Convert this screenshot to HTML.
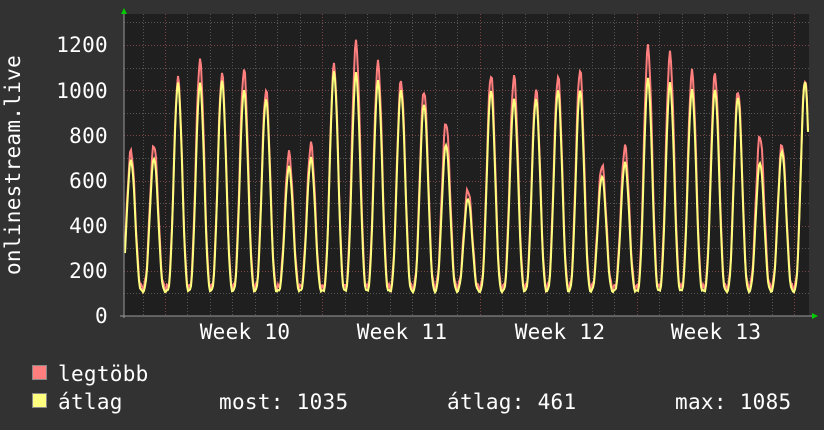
<!DOCTYPE html>
<html><head><meta charset="utf-8"><style>
body{margin:0;background:#323232;width:824px;height:430px;overflow:hidden;font-family:"DejaVu Sans Mono","Liberation Mono",monospace;}
svg{display:block}
text{fill:#fff;font-family:"DejaVu Sans Mono","Liberation Mono",monospace;font-size:21px;letter-spacing:0.3px}
</style></head><body>
<svg id="s" width="824" height="430" xmlns="http://www.w3.org/2000/svg">
<rect x="0" y="0" width="824" height="430" fill="#323232"/>
<rect x="124" y="14" width="685" height="302" fill="#1f1f1f"/>
<g id="grid"></g>
<g id="data"></g>
<line x1="124" y1="10" x2="124" y2="318" stroke="#999" stroke-width="1"/>
<line x1="120" y1="316" x2="814" y2="316" stroke="#999" stroke-width="1"/>
<polygon points="121,14 127,14 124,8" fill="#00cc00"/>
<polygon points="812,313 812,319 818,316" fill="#00cc00"/>
<text x="108" y="52" text-anchor="end">1200</text>
<text x="108" y="98" text-anchor="end">1000</text>
<text x="108" y="143" text-anchor="end">800</text>
<text x="108" y="188" text-anchor="end">600</text>
<text x="108" y="233" text-anchor="end">400</text>
<text x="108" y="278" text-anchor="end">200</text>
<text x="108" y="323" text-anchor="end">0</text>
<text transform="translate(20,165) rotate(-90)" text-anchor="middle">onlinestream.live</text>
<text x="245" y="339" text-anchor="middle">Week 10</text>
<text x="402" y="339" text-anchor="middle">Week 11</text>
<text x="560" y="339" text-anchor="middle">Week 12</text>
<text x="716" y="339" text-anchor="middle">Week 13</text>
<rect x="32.5" y="365.5" width="14" height="14" fill="#ff7f7f" stroke="#888"/>
<rect x="32.5" y="393.5" width="14" height="14" fill="#ffff7f" stroke="#888"/>
<text x="58" y="381">legtöbb</text>
<text x="58" y="409">átlag</text>
<text x="219" y="409">most: 1035</text>
<text x="447" y="409">átlag: 461</text>
<text x="675" y="409">max: 1085</text>
</svg>
<script>
var ns="http://www.w3.org/2000/svg",g=document.getElementById('grid'),d=document.getElementById('data');
function L(x1,y1,x2,y2,c){var l=document.createElementNS(ns,'line');l.setAttribute('x1',x1);l.setAttribute('y1',y1);l.setAttribute('x2',x2);l.setAttribute('y2',y2);l.setAttribute('stroke',c);l.setAttribute('stroke-dasharray','1,2');g.appendChild(l);}
function Y(v){return 316-v*0.2258;}
for(var v=100;v<=1300;v+=100){var y=Math.round(Y(v))+.5;L(124,y,809,y,v%200==0?'#7a4545':'#555');}
for(var k=-2;k<40;k++){var x=165+k*22.47;if(x<125||x>808)continue;x=Math.round(x)+.5;L(x,14,x,316,(k%7==0)?'#7a4545':'#555');}
var peaks=[[131,730,690],[154,760,700],[178,1050,1030],[200,1130,1030],[222,1070,1040],[244,1090,1000],[266,1000,960],[289,720,660],[311,760,700],[334,1110,1080],[356,1210,1075],[378,1120,1040],[401,1040,1000],[424,1000,940],[446,860,760],[468,560,520],[491,1070,1000],[514,1060,960],[536,1000,960],[558,1060,1000],[580,1090,1000],[602,670,620],[625,750,680],[648,1190,1050],[670,1160,1030],[692,1080,1000],[715,1070,1000],[738,1000,970],[760,800,680],[782,760,730],[805,1050,1040]];
function val(x,idx){var bi=0,bd=1e9;for(var i=0;i<peaks.length;i++){var dd=Math.abs(x-peaks[i][0]);if(dd<bd){bd=dd;bi=i;}}var p=peaks[bi];var dx=Math.min((x-p[0])/22.47,0.5);dx=Math.max(dx,-0.5);var f=Math.pow(Math.cos(dx*Math.PI),3);var mn=idx==1?125:110;return mn+(p[idx]-mn)*f+(idx==1?15:5)*Math.sin(x*1.7);}
function draw(idx,c,w){var s='';for(var x=125;x<=808;x+=1){var v=val(x,idx);s+=(s?'L':'M')+x+','+Y(v).toFixed(1);}var p=document.createElementNS(ns,'path');p.setAttribute('d',s);p.setAttribute('fill','none');p.setAttribute('stroke',c);p.setAttribute('stroke-width',w);d.appendChild(p);}
draw(1,'#ff7f7f',2);draw(2,'#ffff7f',2);
</script>
</body></html>
